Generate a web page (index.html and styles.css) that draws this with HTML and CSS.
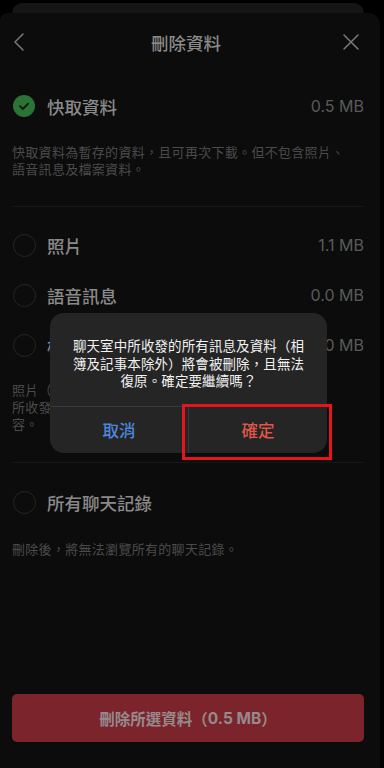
FILE: index.html
```html
<!DOCTYPE html>
<html lang="zh-Hant">
<head>
<meta charset="utf-8">
<link rel="stylesheet" href="styles.css">
</head>
<body>
<div class="screen">
  <div class="back-card"></div>
  <div class="sheet">
    <div class="header">
      <svg class="hicon" width="14" height="20" viewBox="0 0 14 20"><path d="M11 2 L3 10 L11 18" fill="none" stroke="#7a7a7a" stroke-width="1.5" stroke-linecap="round" stroke-linejoin="round"/></svg>
      <div class="title">刪除資料</div>
      <svg class="hicon" width="18" height="18" viewBox="0 0 18 18"><path d="M2 2 L16 16 M16 2 L2 16" fill="none" stroke="#7a7a7a" stroke-width="1.5" stroke-linecap="round"/></svg>
    </div>

    <div class="group first">
      <div class="row">
        <span class="check"><svg width="22" height="22" viewBox="0 0 22 22"><circle cx="11" cy="11" r="11" fill="#2b7435"/><path d="M7 11.2 L9.8 14 L15.2 8.6" fill="none" stroke="#0d1a0f" stroke-width="1.8" stroke-linecap="round" stroke-linejoin="round"/></svg></span>
        <span class="label">快取資料</span>
        <span class="size">0.5 MB</span>
      </div>
      <p class="desc">快取資料為暫存的資料，且可再次下載。但不包含照片、<br>語音訊息及檔案資料。</p>
    </div>

    <div class="group mid">
      <div class="row">
        <span class="radio"></span>
        <span class="label">照片</span>
        <span class="size">1.1 MB</span>
      </div>
      <div class="row">
        <span class="radio"></span>
        <span class="label">語音訊息</span>
        <span class="size">0.0 MB</span>
      </div>
      <div class="row">
        <span class="radio"></span>
        <span class="label">檔案</span>
        <span class="size">0.0 MB</span>
      </div>
      <p class="desc">照片（影片）、語音訊息及檔案將被刪除。但聊天室中<br>所收發的訊息仍會保留，僅無法再查看其相關內<br>容。</p>
    </div>

    <div class="group last">
      <div class="row">
        <span class="radio"></span>
        <span class="label">所有聊天記錄</span>
      </div>
      <p class="desc">刪除後，將無法瀏覽所有的聊天記錄。</p>
    </div>

    <div class="spacer"></div>
    <button class="delete-btn">刪除所選資料（<span class="num">0.5 MB</span>）</button>
  </div>

  <div class="dialog">
    <p class="dialog-text">聊天室中所收發的所有訊息及資料（相<br>簿及記事本除外）將會被刪除，且無法<br>復原。確定要繼續嗎？</p>
    <div class="dialog-actions">
      <span class="act cancel">取消</span>
      <span class="act confirm">確定</span>
    </div>
  </div>
  <div class="highlight"></div>
</div>
</body>
</html>
```

FILE: styles.css
```css
* { box-sizing: border-box; }
html, body {
  margin: 0;
  padding: 0;
  background: #000;
  width: 384px;
  height: 768px;
  overflow: hidden;
  font-family: "Noto Sans CJK TC", "Noto Sans", sans-serif;
}
.screen {
  position: relative;
  width: 384px;
  height: 768px;
}
.back-card {
  margin: 3px 20px 0 12px;
  height: 10px;
  background: #151515;
  border-radius: 10px 10px 0 0;
}
.sheet {
  width: 380px;
  height: 755px;
  background: #0c0c0c;
  border-radius: 8px 12px 0 0;
  display: flex;
  flex-direction: column;
  padding: 0 16px 26px 12px;
}
.header {
  height: 58px;
  display: flex;
  align-items: center;
  justify-content: space-between;
  padding: 0 4px 0 0;
}
.hicon { display: block; }
.title {
  font-size: 17.5px;
  color: #8a8a8a;
  font-weight: 500;
  margin-left: 4px;
}
.group {
  border-bottom: 1px solid #171717;
  padding: 13px 0 29px;
}
.group.first { padding-top: 10px; }
.group.mid { padding-bottom: 30px; }
.group.last { border-bottom: none; padding-top: 14px; }
.row {
  height: 50px;
  display: flex;
  align-items: center;
}
.check, .radio {
  width: 23px;
  height: 23px;
  flex: none;
  margin-left: 1px;
  margin-right: 11px;
}
.check svg { display: block; }
.radio {
  border: 1px solid #262626;
  border-radius: 50%;
}
.label {
  font-size: 17.5px;
  color: #8a8a8a;
  font-weight: 500;
  flex: 1;
}
.size {
  font-family: "Inter", "Noto Sans", sans-serif;
  font-size: 16px;
  color: #5a5a5a;
}
.desc {
  margin: 13px 0 0;
  font-size: 13px;
  letter-spacing: 0.3px;
  line-height: 16.5px;
  color: #4b4b4b;
}
.group.mid .desc { margin-top: 11px; line-height: 17px; }
.group.last .desc { margin-top: 14px; }
.spacer { flex: 1; }
.delete-btn {
  width: 352px;
  height: 48px;
  border: none;
  border-radius: 5px;
  background: #7b242b;
  color: #968a8b;
  font-family: "Noto Sans CJK TC", "Noto Sans", sans-serif;
  font-size: 15.5px;
  font-weight: 700;
  display: flex;
  align-items: center;
  justify-content: center;
  padding: 0;
}
.delete-btn .num { font-family: "Inter", sans-serif; font-weight: 700; }

.dialog {
  position: absolute;
  left: 50px;
  top: 310px;
  width: 277px;
  height: 140px;
  background: #252525;
  border-radius: 14px;
  display: flex;
  flex-direction: column;
  overflow: hidden;
}
.dialog-text {
  margin: 0;
  padding: 24px 10px 0;
  height: 94px;
  text-align: center;
  color: #f2f2f2;
  font-size: 13.5px;
  line-height: 17.5px;
  letter-spacing: 0.1px;
  border-bottom: 1px solid #3a3a3a;
}
.dialog-actions {
  flex: 1;
  display: flex;
}
.act {
  flex: 1;
  display: flex;
  align-items: center;
  justify-content: center;
  font-size: 16.5px;
  font-weight: 500;
}
.cancel { color: #4d87dc; border-right: 1px solid #3a3a3a; }
.confirm { color: #df5748; }
.highlight {
  position: absolute;
  left: 182px;
  top: 401px;
  width: 150px;
  height: 56px;
  border: 3px solid #e5141d;
}
```
